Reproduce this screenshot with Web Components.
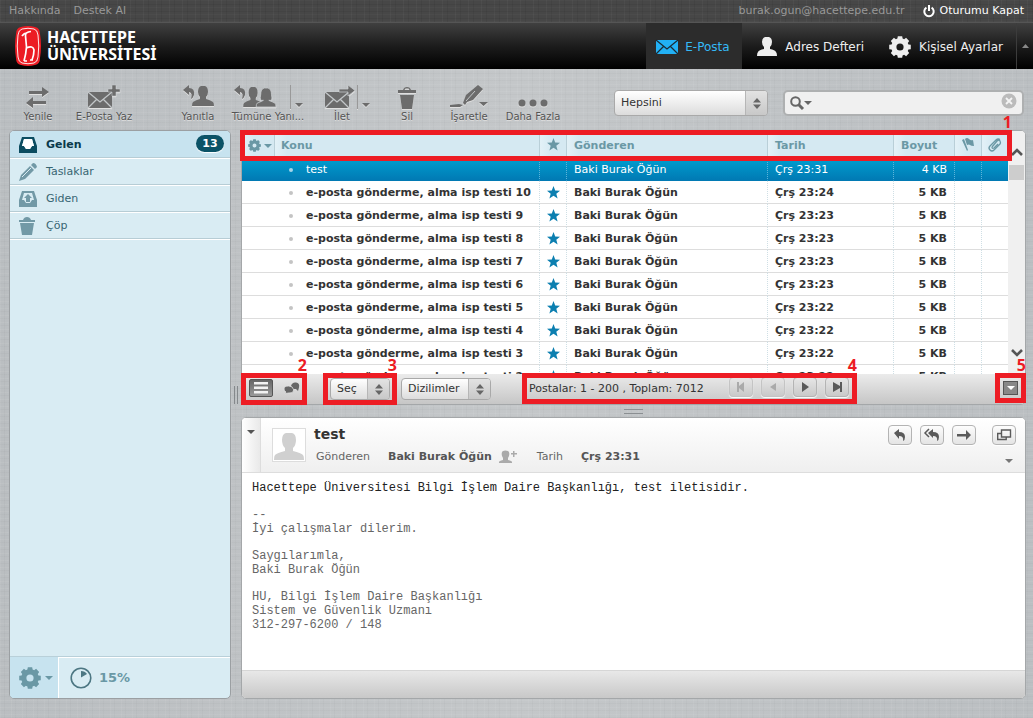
<!DOCTYPE html>
<html lang="tr">
<head>
<meta charset="utf-8">
<title>Hacettepe Üniversitesi E-Posta</title>
<style>
html{height:100%}
body{margin:0;font:11px/14px "DejaVu Sans",Verdana,sans-serif;color:#333}
</style>
</head>
<body>
<mail-app></mail-app>
<script>
const define=(tag,markup,setup)=>{
  const t=document.createElement('template');
  t.innerHTML=`<style>*{box-sizing:border-box}a{color:inherit;text-decoration:none}button,input,select{font:inherit;color:inherit;margin:0}button{padding:0;border:0;background:none;cursor:pointer}</style>`+markup;
  customElements.define(tag,class extends HTMLElement{
    constructor(){super();this.attachShadow({mode:'open'}).append(t.content.cloneNode(true));}
    connectedCallback(){if(setup)setup(this,this.shadowRoot);}
  });
};

/* Outline of an eight-toothed gear with a round hole */
const gear=(c,r,hole)=>{
  let d='';
  const p=(a,q)=>(c+Math.cos(a)*q).toFixed(2)+' '+(c+Math.sin(a)*q).toFixed(2);
  for(let i=0;i<8;i++){
    const a=i*Math.PI/4;
    d+=(i?'L':'M')+p(a-.3,r*.8)+'L'+p(a-.2,r)+'L'+p(a+.2,r)+'L'+p(a+.3,r*.8);
  }
  return `<path fill-rule="evenodd" d="${d}ZM${c-hole} ${c}a${hole} ${hole} 0 1 0 ${2*hole} 0a${hole} ${hole} 0 1 0 ${-2*hole} 0Z"/>`;
};
const bust='M7 0h4q3 1 3 6q0 3-2 5v2q4 1 7 3q1 1 1 4H-2q0-3 1-4q3-2 7-3v-2q-2-2-2-5q0-5 3-6Z';
const star='M6.5 0L8.2 4.6L13 4.8L9.3 7.8L10.6 12.5L6.5 9.8L2.4 12.5L3.7 7.8L0 4.8L4.8 4.6Z';
const reply='M0 5L6 0v3q6 0 5 7q-1 3-3 4q2-6-2-7v3Z';
const icons={
  power:[12,12,'<path d="M3.4 2.6a4.7 4.7 0 1 0 5.2 0M6 0v6" fill="none" stroke="currentColor" stroke-width="2"/>'],
  mail:[22,16,'<path d="M0 1h22v14H0Z"/><path d="M0 1l11 9L22 1M0 15l8-8M22 15l-8-8" fill="none" stroke="#1c2a33" stroke-width="1.2"/>'],
  person:[20,20,'<path d="M8 0h4q3 1 3 5q0 3-2 5v2q5 1 6 3q1 1 1 4H0q0-3 1-4q1-2 6-3v-2q-2-2-2-5q0-4 3-5Z"/>'],
  gear:[22,22,gear(11,11,3.6)],
  gearSmall:[13,13,gear(6.5,6.5,2)],
  up:[7,4,'<path d="M0 4L3.5 0L7 4Z"/>'],
  down:[8,4,'<path d="M0 0h8L4 4Z"/>'],
  refresh:[24,22,'<path d="M3 4h13V0l7 5-7 5V7H3ZM20 14H7v-4L0 16l7 5v-4h13Z"/>'],
  compose:[32,24,'<path d="M0 7h24v16H0Z"/><path d="M0 7l12 10L24 7M0 23l9-9M24 23l-9-9" fill="none" stroke="#c3c7c9" stroke-width="1.3"/><path d="M24 0h4v4h4v3h-4v4h-4V7h-4V4h4Z" stroke="#c3c7c9" stroke-width=".6"/>'],
  reply1:[30,24,`<path d="${reply}"/><g transform="translate(11 1)"><path d="${bust}"/></g>`],
  replyAll:[42,24,`<path d="${reply}"/><g transform="translate(11 2) scale(.9 1)"><path d="${bust}"/></g><g transform="translate(24 3) scale(.9 .95)"><path d="M7 0h4q4 1 4 7q1 4 0 6h-3q5 2 7 3q1 1 1 4H-2q0-3 1-4q3-1 7-3H3q-1-3 0-6q0-6 4-7Z" stroke="#c3c7c9" stroke-width=".9"/></g>`],
  forward:[40,24,'<g transform="translate(10 0)"><path d="M0 7h24v16H0Z"/><path d="M0 7l12 10L24 7M0 23l9-9M24 23l-9-9" fill="none" stroke="#c3c7c9" stroke-width="1.3"/><path d="M14 4h9V0l7 5.500-7 5.500V7h-9Z" stroke="#c3c7c9" stroke-width=".8"/></g>'],
  trash:[18,22,'<path d="M0 3h5q1-3 4-3t4 3h5v3H0ZM2 8h14l-2 14H4ZM6.500 3h5l-1-1.500h-3Z" fill-rule="evenodd"/>'],
  marker:[38,24,'<path d="M0 20l9-1 4 1-3 2H0ZM13 18l3-8L28 0l5 4L23 15l-6 2-2 3ZM29 17h9l-4.500 4Z"/><path d="M16 16l9-10" stroke="#c3c7c9" stroke-width="1"/>'],
  dots:[30,24,'<circle cx="4" cy="18" r="3.500"/><circle cx="15" cy="18" r="3.500"/><circle cx="26" cy="18" r="3.500"/>'],
  updown:[8,11,'<path d="M0 4.500L4 0l4 4.500ZM0 6.500L4 11l4-4.500Z"/>'],
  search:[14,14,'<circle cx="5.500" cy="5.500" r="4.300" fill="none" stroke="currentColor" stroke-width="2"/><path d="M8.500 8.500L13 13" stroke="currentColor" stroke-width="3"/>'],
  clear:[16,16,'<circle cx="8" cy="8" r="7.500"/><path d="M5 5l6 6M11 5l-6 6" stroke="#f4f4f4" stroke-width="1.800"/>'],
  inbox:[18,16,'<path fill-rule="evenodd" d="M3 0h12l3 9v7H0V9ZM5 2L3 9h2l2 3h4l2-3h2L13 2Z"/><path d="M5 2h8l2 7h-2l-2 3H7L5 9H3Z" fill="#fff"/>'],
  pencil:[18,18,'<path d="M0 18l2-6L11 3l4 4-9 9ZM12 2l2-2q3 0 4 4l-2 2Z"/><path d="M3 14L12 5" stroke="#d9ecf3" stroke-width="1"/>'],
  sent:[18,16,'<path fill-rule="evenodd" d="M3 0h12l3 9v7H0V9ZM5 2L3 9h2l2 3h4l2-3h2L13 2ZM9 3l4 4h-2v4H7V7H5Z"/>'],
  bin:[16,18,'<path d="M0 3h4q1-3 4-3t4 3h4v2H0ZM1 6h14l-2 12H3Z"/>'],
  star:[13,13,`<path d="${star}"/>`],
  flag:[12,13,'<path d="M0 2l2-1 4 11-1 1ZM3 1q2-2 4 0t4 1l1 6q-3 0-4-1T5 7Z"/>'],
  clip:[14,14,'<path d="M4 9L9 3q2-2 3 0t0 3L6 12q-2 2-4 0t0-4L8 2q2-2 4-.500M4 9q0 2 2 1l4-4" fill="none" stroke="currentColor" stroke-width="1.300"/>'],
  chevUp:[12,8,'<path d="M1 7l5-5 5 5" fill="none" stroke="currentColor" stroke-width="2.600"/>'],
  chevDown:[12,8,'<path d="M1 1l5 5 5-5" fill="none" stroke="currentColor" stroke-width="2.600"/>'],
  lines:[14,12,'<path d="M0 0h14v2.500H0ZM0 4.500h14V7H0ZM0 9h14v2.500H0Z"/>'],
  chat:[16,14,'<path d="M7 5q1-4 5-3.500t3 5L14 10l-2-2H9Z"/><path d="M0 8q0-3 4.500-3T9.500 8.500T5 12H4L1 13l1-2Q0 10 0 8Z" stroke="#dedede" stroke-width=".8"/>'],
  first:[10,10,'<path d="M1 0h2v4l5-4v10L3 6v4H1Z"/>'],
  prev:[8,8,'<path d="M7 0v8L1 4Z"/>'],
  next:[8,10,'<path d="M1 0v10L8 5Z"/>'],
  last:[10,10,'<path d="M8 0h2v10H8V6l-7 4V0l7 4Z"/>'],
  rep:[12,12,'<path d="M0 4L5 0v3q6 0 6 5q0 3-2 4q1-5-4-5v3Z"/>'],
  repAll:[14,12,'<path d="M3 4L8 0v3q6 0 6 5q0 3-2 4q1-5-4-5v2Z"/><path d="M4 0L0 4l4 4" fill="none" stroke="currentColor" stroke-width="1.500"/>'],
  fwd:[14,10,'<path d="M0 4h9V0l5 5-5 5V6.500H0Z"/>'],
  popup:[14,12,'<path d="M4.500 1h9v7h-9ZM4 4.500H.700v6h8.500V8" fill="none" stroke="currentColor" stroke-width="1.400"/>'],
  avatar:[30,30,'<path d="M12 3h6q4 1 4 7q0 5-3 8v3q8 2 10 4q1 1 1 5H0q0-4 1-5q2-2 10-4v-3q-3-3-3-8q0-6 4-7Z"/>'],
  addPerson:[18,14,'<path d="M4 1q2-1 5 0q2 1 1 5L9 8v2q4 1 4 2v1H0v-1q0-1 4-2V8L3 6Q2 2 4 1ZM14 1h1.500v2H18v1.500h-2.500V7H14V4.500h-2V3h2Z"/>'],
  pie:[22,22,'<circle cx="11" cy="11" r="9.800" fill="none" stroke="currentColor" stroke-width="1.600"/><path d="M11 10.500V4q4 0 6 3Z"/>'],
  badge:[26,40,'<path d="M6 1Q13-1 20 1Q25 2 25 8Q27 20 25 32Q25 38 20 39Q13 41 6 39Q1 38 1 32Q-1 20 1 8Q1 2 6 1Z" fill="#ec1c24"/><path d="M7 3Q13 1.500 19 3Q22.500 4 23 9Q24.500 20 23 31Q22.500 36 19 37Q13 38.500 7 37Q3.500 36 3 31Q1.500 20 3 9Q3.500 4 7 3Z" fill="none" stroke="#fff" stroke-width=".9"/><path d="M16 5.500Q10 6 10.500 10L11.500 21Q11 28 9 35M7 10Q9 7 12 7M11.500 22Q18 19 19 24Q19 29 17 34M9 35h3M15 34h3" fill="none" stroke="#fff" stroke-width="1.700"/>']
};
define('ui-icon','<style>:host{display:inline-block;flex:none}i{display:block}svg{display:block;fill:currentColor;overflow:visible}</style><i></i>',(el,r)=>{
  const icon=icons[el.getAttribute('name')];
  if(!icon)return;
  const [w,h,m]=icon;
  r.querySelector('i').innerHTML=`<svg width="${w}" height="${h}" viewBox="0 0 ${w} ${h}" aria-hidden="true">${m}</svg>`;
});

/* Numbered red frame drawn over the slotted group */
define('call-out',`<style>
:host{display:flex;align-items:center;position:relative}
.frame{position:absolute;inset:var(--inset,-1px 0);border:5px solid #ed1c24;pointer-events:none;z-index:2}
b{position:absolute;right:-5px;bottom:100%;margin-bottom:5px;font:bold 16px/16px "Noto Sans",sans-serif;color:#ed1c24}
</style><slot></slot><div class="frame"><b></b></div>`,(el,r)=>{r.querySelector('b').textContent=el.getAttribute('number');});

/* Drop-down with a stepper-like arrow plate */
define('pick-list',`<style>
:host{display:flex;position:relative;height:22px;width:90px}
select{appearance:none;flex:1;min-width:0;border:1px solid #a9a9a9;border-radius:4px;padding:0 0 0 6px;color:#333;background:linear-gradient(#fff,#dcdcdc)}
span{position:absolute;right:1px;top:1px;bottom:1px;width:22px;display:grid;place-items:center;border-left:1px solid #b6b6b6;border-radius:0 3px 3px 0;background:linear-gradient(#e2e2e2,#c8c8c8);color:#666;pointer-events:none}
</style><select><option></option></select><span><ui-icon name="updown"></ui-icon></span>`,(el,r)=>{
  r.querySelector('option').textContent=el.getAttribute('value');
  r.querySelector('select').setAttribute('aria-label',el.getAttribute('label'));
});

define('small-button',`<style>
:host{display:flex}
button{width:24px;height:20px;display:grid;place-items:center;border:1px solid #b4b4b4;border-radius:4px;background:linear-gradient(var(--hi,#fdfdfd),var(--lo,#e4e4e4));box-shadow:0 1px 1px #fff;color:#5a5a5a}
:host([off]) button{color:#aaa;border-color:#c4c4c4}
</style><button type="button"></button>`,(el,r)=>{
  const b=r.querySelector('button');
  b.innerHTML=`<ui-icon name="${el.getAttribute('icon')}"></ui-icon>`;
  b.setAttribute('aria-label',el.getAttribute('label'));
});

define('top-bar',`<style>
:host{display:flex;align-items:center;height:23px;padding:0 9px;color:#999;border-bottom:1px solid #555;box-sizing:border-box;
background:repeating-linear-gradient(90deg,#ffffff08 0 1px,#0000 1px 5px,#00000010 5px 6px,#0000 6px 13px),repeating-linear-gradient(#ffffff06 0 1px,#0000 1px 4px,#00000010 4px 5px,#0000 5px 7px),#474747}
a+a{margin-left:13px}
.user{margin-left:auto}
.user+.out{display:flex;align-items:center;gap:5px;color:#fff;margin-left:18px}
</style><a href="#">Hakkında</a><a href="#">Destek Al</a><span class="user">burak.ogun@hacettepe.edu.tr</span><a class="out" href="#"><ui-icon name="power"></ui-icon>Oturumu Kapat</a>`);

define('app-header',`<style>
:host{display:flex;height:46px;padding-left:15px;background:linear-gradient(#404040,#1c1c1c 50%,#000)}
.logo{display:flex;align-items:center;gap:6px;color:#fff;font:bold 16px/17px "Noto Sans",sans-serif}
nav{display:flex;margin-left:auto;font-size:12px;color:#eee}
nav a{display:flex;align-items:center;gap:8px;padding:2px 11px 0 10px}
nav a.on{width:96px;background:#2c2c2c;color:#35b9f6;gap:7px;margin-right:5px}
nav a+a+a{margin-left:4px;padding-right:13px}
.more{display:flex;align-items:center;width:17px;padding-left:6px;background:linear-gradient(90deg,#3c3c3c 1px,#0000 1px);color:#888;box-sizing:border-box}
</style><a class="logo" href="#"><ui-icon name="badge"></ui-icon><span>HACETTEPE<br>ÜNİVERSİTESİ</span></a>
<nav><a class="on" href="#"><ui-icon name="mail" style="color:#22b1f5"></ui-icon>E-Posta</a><a href="#"><ui-icon name="person"></ui-icon>Adres Defteri</a><a href="#"><ui-icon name="gear"></ui-icon>Kişisel Ayarlar</a></nav><button class="more" type="button" aria-label="Gizle"><ui-icon name="up"></ui-icon></button>`);

define('tool-button',`<style>
:host{display:block;width:var(--w,66px)}
button{display:flex;flex-direction:column;align-items:center;width:100%;font-size:10px;color:#555;text-shadow:0 1px #ddd;white-space:nowrap}
span{display:flex;align-items:flex-end;height:26px;margin-bottom:1px;color:#6c6c6c;filter:drop-shadow(0 1px 0 #e0e0e0)}
.split{display:none;width:13px;height:24px;border-left:1px solid #999;margin-left:var(--gap,2px);padding:12px 0 0 4px}
:host([split]) .split{display:block}
</style><button type="button"><span><slot name="icon"></slot><i class="split"><ui-icon name="down"></ui-icon></i></span><slot></slot></button>`);

define('search-box',`<style>
:host{display:flex;align-items:center;box-sizing:border-box;width:241px;height:26px;padding:0 5px;border:2px solid #aeb0b1;border-radius:5px;background:#f0f0f0;color:#666}
input{flex:1;min-width:0;border:0;background:none;outline:0}
button{color:#bbb}
</style><ui-icon name="search"></ui-icon><ui-icon name="down"></ui-icon><input type="text" aria-label="Ara"><button type="button" aria-label="Temizle"><ui-icon name="clear"></ui-icon></button>`);

define('mail-toolbar',`<style>
:host{display:flex;height:61px;padding:14px 9px 0 5px;box-sizing:border-box}
.gap{width:28px}
pick-list{width:154px;height:26px;margin:7px 15px 0 auto}
search-box{margin-top:7px}
</style>
<tool-button><ui-icon slot="icon" name="refresh"></ui-icon>Yenile</tool-button>
<tool-button><ui-icon slot="icon" name="compose"></ui-icon>E-Posta Yaz</tool-button>
<div class="gap"></div>
<tool-button><ui-icon slot="icon" name="reply1"></ui-icon>Yanıtla</tool-button>
<tool-button split style="--w:74px;--gap:14px"><ui-icon slot="icon" name="replyAll"></ui-icon>Tümüne Yanı...</tool-button>
<tool-button split style="--w:74px"><ui-icon slot="icon" name="forward"></ui-icon>İlet</tool-button>
<tool-button style="--w:56px"><ui-icon slot="icon" name="trash"></ui-icon>Sil</tool-button>
<tool-button style="--w:68px"><ui-icon slot="icon" name="marker"></ui-icon>İşaretle</tool-button>
<tool-button style="--w:60px"><ui-icon slot="icon" name="dots"></ui-icon>Daha Fazla</tool-button>
<pick-list value="Hepsini" label="Filtre"></pick-list><search-box></search-box>`);

define('folder-item',`<style>
:host{display:block;border-bottom:1px solid #b7cdd5;box-shadow:0 1px #fff}
a{display:flex;align-items:center;height:26px;padding:1px 6px 0 9px;color:#376572}
.ic{width:27px;display:flex;color:#7299a6}
.count{margin-left:auto;min-width:28px;height:17px;margin-bottom:2px;border-radius:9px;background:#0b5367;box-shadow:0 1px 1px #fff;color:#fff;font-size:11px;line-height:17px;text-align:center}
.count:empty{display:none}
:host([on]) a{background:#c7e3ef;color:#0a3a4b;font-weight:bold}
:host([on]) .ic{color:#0b4c60}
</style><a href="#"><span class="ic"><slot name="icon"></slot></span><slot></slot><span class="count"></span></a>`,(el,r)=>{r.querySelector('.count').textContent=el.getAttribute('count')||'';});

define('folder-pane',`<style>
:host{display:flex;flex-direction:column;box-sizing:border-box;flex:none;width:222px;border:1px solid #9b9fa2;border-radius:5px;background:#d9ecf3;overflow:hidden}
nav{flex:1;display:flex;flex-direction:column}
footer{display:flex;height:42px;border-top:1px solid #b9d0d9;box-shadow:inset 0 1px #fff}
footer button{display:flex;align-items:center;gap:4px;width:49px;padding-left:9px;background:#c7e3ef;border-right:1px solid #fff;color:#6a98a5}
.quota{display:flex;align-items:center;gap:7px;padding-left:11px;font-weight:bold;font-size:13px;color:#6a98a5}
</style><nav>
<folder-item on count="13"><ui-icon slot="icon" name="inbox"></ui-icon>Gelen</folder-item>
<folder-item><ui-icon slot="icon" name="pencil"></ui-icon>Taslaklar</folder-item>
<folder-item><ui-icon slot="icon" name="sent"></ui-icon>Giden</folder-item>
<folder-item><ui-icon slot="icon" name="bin"></ui-icon>Çöp</folder-item></nav>
<footer><button type="button" aria-label="Klasör işlemleri"><ui-icon name="gear"></ui-icon><ui-icon name="down"></ui-icon></button><div class="quota"><ui-icon name="pie" style="color:#4d7783"></ui-icon>15%</div></footer>`);

define('message-table',`<style>
:host{display:flex;height:243px;overflow:hidden}
.rows{flex:1;min-width:0;background:#fff}
table{width:100%;table-layout:fixed;border-collapse:separate;border-spacing:0}
th{height:27px;padding:2px 7px 0;background:linear-gradient(90deg,#e3f1f7,#d5e9f2 12px);border-left:1px solid #b9cfd8;text-align:left;color:#6a98a5}
th:nth-child(2){padding-left:6px}
th:first-child{border:0;padding:2px 0 0 6px}
th ui-icon,td ui-icon{vertical-align:middle}
.opt{display:flex;align-items:center;gap:3px}
th.ic,td.ic{padding:0;text-align:center;line-height:13px}
td{height:23px;padding:2px 7px 0;border-bottom:1px solid #ddd;border-left:1px dotted #cfdfe5;font-weight:bold;white-space:nowrap;color:#333}
td:nth-child(-n+2){border-left:0}
td:nth-child(2){padding-left:15px}
td:nth-child(2)::before{content:"";display:inline-block;width:4px;height:4px;border-radius:2px;background:#c4c4c4;margin-right:13px;vertical-align:middle}
td:nth-child(3){color:#0c7fb0}
td:nth-child(6){text-align:right}
tr.on td{font-weight:normal;color:#fff;border-bottom-color:#017ab4;background:linear-gradient(#009fd0,#017ab4)}
tr.on td:nth-child(n+3){border-left-color:#5db4da}
tr.on td:nth-child(2)::before{background:#a5d5ea}
.bar{width:17px;flex:none;display:flex;flex-direction:column;align-items:center;background:#f0f0f0;border-radius:0 4px 0 0;color:#555;padding-top:17px}
.thumb{width:15px;height:15px;background:#cdcdcd;margin:9px 0 auto}
.bar ui-icon:last-child{margin-bottom:17px}
</style><div class="rows"><table><colgroup><col style="width:32px"><col><col style="width:27px"><col style="width:201px"><col style="width:126px"><col style="width:61px"><col style="width:27px"><col style="width:27px"></colgroup>
<thead><tr><th><div class="opt"><ui-icon name="gearSmall"></ui-icon><ui-icon name="down"></ui-icon></div></th><th>Konu</th><th class="ic"><ui-icon name="star"></ui-icon></th><th>Gönderen</th><th>Tarih</th><th>Boyut</th><th class="ic"><ui-icon name="flag"></ui-icon></th><th class="ic"><ui-icon name="clip"></ui-icon></th></tr></thead><tbody></tbody></table></div>
<div class="bar"><ui-icon name="chevUp"></ui-icon><div class="thumb"></div><ui-icon name="chevDown"></ui-icon></div>`,(el,r)=>{
  const rows=[['test','23:31','4 KB']];
  [['10','24'],['9','23'],['8','23'],['7','23'],['6','23'],['5','22'],['4','22'],['3','22'],['2','22']].forEach(([n,m])=>rows.push(['e-posta gönderme, alma isp testi '+n,'23:'+m,'5 KB']));
  r.querySelector('tbody').innerHTML=rows.map(([s,t,k],i)=>`<tr${i?'':' class="on"'}><td></td><td>${s}</td><td class="ic">${i?'<ui-icon name="star"></ui-icon>':''}</td><td>Baki Burak Öğün</td><td>Çrş ${t}</td><td>${k}</td><td></td><td></td></tr>`).join('');
});

define('list-footer',`<style>
:host{display:flex;align-items:center;height:30px;background:linear-gradient(#ebebeb,#c6c6c6);border-radius:0 0 4px 4px}
call-out{align-self:stretch}
.mode{--inset:-1px 0 -1px -1px;padding:0 7px 2px;margin-right:16px;gap:11px}
.mode button{display:grid;place-items:center;height:18px;color:#666}
.mode button.on{width:24px;background:linear-gradient(#666,#999);border:1px solid #555;border-radius:2px;color:#f2f2f2}
.sel{padding:0 7px;margin-right:4px}
.sel pick-list{width:60px}
.pages{--inset:-1px 0 0;padding:0 8px 4px 7px;margin-left:31px}
.pages span{width:184px;margin:4px 16px 0 0}
.pages small-button+small-button{margin-left:8px}
.pages small-button{--hi:#e6e6e6;--lo:#c9c9c9}
.view{--inset:-1px -1px 1px 0;margin-left:auto;padding:0 7px 2px 8px}
.view button{display:grid;place-items:center;width:15px;height:14px;border:1px solid #555;background:#888;color:#fff}
</style>
<call-out number="2" class="mode"><button class="on" type="button" aria-label="Liste"><ui-icon name="lines"></ui-icon></button><button type="button" aria-label="Konuşmalar"><ui-icon name="chat"></ui-icon></button></call-out>
<call-out number="3" class="sel"><pick-list value="Seç" label="Seç"></pick-list></call-out>
<pick-list value="Dizilimler" label="Dizilimler"></pick-list>
<call-out number="4" class="pages"><span>Postalar: 1 - 200 , Toplam: 7012</span><small-button off icon="first" label="İlk"></small-button><small-button off icon="prev" label="Önceki"></small-button><small-button icon="next" label="Sonraki"></small-button><small-button icon="last" label="Son"></small-button></call-out>
<call-out number="5" class="view"><button type="button" aria-label="Önizleme"><ui-icon name="down"></ui-icon></button></call-out>`);

define('message-view',`<style>
:host{display:flex;flex-direction:column;box-sizing:border-box;flex:1;border:1px solid #a4a7a9;border-radius:5px;background:#fff;overflow:hidden}
header{display:flex;height:55px;border-bottom:1px solid #ddd;background:linear-gradient(#fff,#efefef)}
.fold{width:19px;display:flex;justify-content:center;padding-top:12px;border-right:1px solid #ddd;background:linear-gradient(90deg,#fff,#e9e9e9);color:#555}
.pic{width:34px;height:34px;margin:10px 8px 0 11px;padding:1px;border:1px solid #ddd;background:#fff;color:#d0d0d0}
h1{margin:7px 0 0;font-size:14px;line-height:18px}
.meta{display:flex;align-items:center;margin:7px 0 0 2px;color:#666}
.meta b{margin:0 7px 0 18px;color:#555}
.meta i{font-style:normal;margin-left:20px}
.acts{margin-left:auto;padding:7px 9px 0 0}
.acts div{display:flex;gap:8px}
.acts small-button:last-child{margin-left:8px}
.acts>button{display:block;margin:8px 3px 0 auto;color:#777}
article{flex:1;padding:8px 10px;font:12px/14px "Liberation Mono","Courier New",monospace;color:#666}
p{margin:0 0 13px}
p:first-child{color:#222}
footer{height:28px;border-top:1px solid #d6d6d6;background:linear-gradient(#e8e8e8,#c8c8c8)}
</style><header><button class="fold" type="button" aria-label="Ayrıntılar"><ui-icon name="down"></ui-icon></button>
<div class="pic"><ui-icon name="avatar"></ui-icon></div>
<div><h1>test</h1><div class="meta">Gönderen<b>Baki Burak Öğün</b><ui-icon name="addPerson" style="color:#aaa"></ui-icon><i>Tarih</i><b>Çrş 23:31</b></div></div>
<div class="acts"><div><small-button icon="rep" label="Yanıtla"></small-button><small-button icon="repAll" label="Tümüne yanıtla"></small-button><small-button icon="fwd" label="İlet"></small-button><small-button icon="popup" label="Yeni pencere"></small-button></div><button type="button" aria-label="Daha fazla"><ui-icon name="down"></ui-icon></button></div></header>
<article><p>Hacettepe Üniversitesi Bilgi İşlem Daire Başkanlığı, test iletisidir.</p><p>--<br>İyi çalışmalar dilerim.</p><p>Saygılarımla,<br>Baki Burak Öğün</p><p>HU, Bilgi İşlem Daire Başkanlığı<br>Sistem ve Güvenlik Uzmanı<br>312-297-6200 / 148</p></article><footer></footer>`);

define('mail-app',`<style>
:host{display:flex;flex-direction:column;min-height:100vh;
background:repeating-linear-gradient(90deg,#ffffff0e 0 1px,#0000 1px 4px,#00000005 4px 5px,#0000 5px 11px),repeating-linear-gradient(#ffffff0e 0 1px,#0000 1px 3px,#00000005 3px 4px,#0000 4px 7px),linear-gradient(90deg,#babec1,#c4c7c9 50%,#bbbfc2)}
main{flex:1;display:flex;padding:0 7px 19px 9px}
.grip{width:10px;display:flex;justify-content:center;gap:2px;align-items:center;padding-bottom:40px}
.grip i{width:1px;height:18px;background:#85898c}
.right{flex:1;min-width:0;display:flex;flex-direction:column}
.list{border:1px solid #a4a7a9;border-radius:5px;background:#fff}
.cols{display:block;--inset:-1px 13px 213px -2px}
.split{height:12px;display:grid;place-items:center}
.split i{width:19px;height:5px;border:solid #8b8f92;border-width:1px 0}
</style><top-bar></top-bar><app-header></app-header><mail-toolbar></mail-toolbar>
<main><folder-pane></folder-pane><div class="grip"><i></i><i></i></div>
<div class="right"><section class="list"><call-out number="1" class="cols"><message-table></message-table></call-out><list-footer></list-footer></section>
<div class="split"><i></i></div><message-view></message-view></div></main>`);
</script>
</body>
</html>
